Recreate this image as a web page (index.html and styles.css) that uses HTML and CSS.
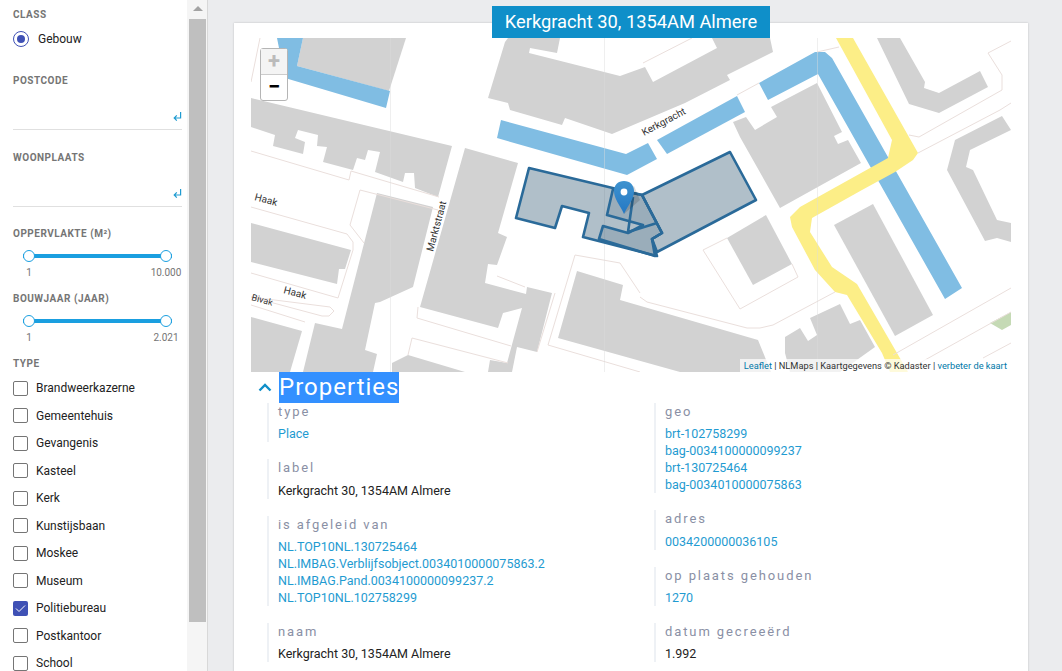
FILE: index.html

```html
<!DOCTYPE html>
<html>
  <head>
    <meta http-equiv="Content-Type" content="text/html; charset=UTF-8" />
    <title>Kerkgracht 30, 1354AM Almere</title>
    <link rel="stylesheet" href="styles.css">
  </head>
  <body>
  <div class="page">
    <aside class="filters">
      <div class="label first">Class</div>
      <div class="radio-row"><span class="radio"></span>Gebouw</div>

      <div class="label postcode">Postcode</div>
      <div class="input">
        <svg class="enter" width="9" height="9" viewBox="0 0 9 9"><path d="M7.6 0V6H1.2M3.8 3.4L1.2 6L3.8 8.6" fill="none" stroke="#1f9bd1" stroke-width="1.2"/></svg>
      </div>

      <div class="label woonplaats">Woonplaats</div>
      <div class="input">
        <svg class="enter" width="9" height="9" viewBox="0 0 9 9"><path d="M7.6 0V6H1.2M3.8 3.4L1.2 6L3.8 8.6" fill="none" stroke="#1f9bd1" stroke-width="1.2"/></svg>
      </div>

      <div class="label oppervlakte">Oppervlakte (m²)</div>
      <div class="slider"><span class="handle"></span><span class="handle"></span></div>
      <div class="range"><span>1</span><span>10.000</span></div>

      <div class="label bouwjaar">Bouwjaar (jaar)</div>
      <div class="slider"><span class="handle"></span><span class="handle"></span></div>
      <div class="range"><span>1</span><span>2.021</span></div>

      <div class="label type">Type</div>
      <ul class="checks">
        <li><span class="box"></span>Brandweerkazerne</li>
        <li><span class="box"></span>Gemeentehuis</li>
        <li><span class="box"></span>Gevangenis</li>
        <li><span class="box"></span>Kasteel</li>
        <li><span class="box"></span>Kerk</li>
        <li><span class="box"></span>Kunstijsbaan</li>
        <li><span class="box"></span>Moskee</li>
        <li><span class="box"></span>Museum</li>
        <li><span class="box checked"><svg width="15" height="15" viewBox="0 0 15 15"><path d="M3 7.5L6 10.5L12 4.5" fill="none" stroke="#fff" stroke-width="1"/></svg></span>Politiebureau</li>
        <li><span class="box"></span>Postkantoor</li>
        <li><span class="box"></span>School</li>
      </ul>
    </aside>

    <div class="scrollbar">
      <span class="arrow"></span>
      <span class="thumb"></span>
    </div>

    <main class="content">
      <div class="card">
        <div class="title-row"><h1 class="title">Kerkgracht 30, 1354AM Almere</h1></div>

        <div class="map">
          <svg class="tiles" width="760" height="334" viewBox="251 38 760 334">
            <g fill="#d2d2d2">
              <polygon points="303,38 406,38 389,91 297,66"/>
              <polygon points="251,98 452,146 438,197 415,188 414,173 405,173 403,182 375,172 380,152 368,150 365,160 357,158 353,170 323,162 327,147 317,146 318,135 298,130 295,138 305,142 303,154 273,146 275,135 251,127"/>
              <polygon points="508,38 505,42 488,98 508,103 510,110 562,125 565,118 612,134 685,103 730,80 727,75 773,52 770,38 712,38 717,48 653,82 645,67 620,76 529,53 530,48 557,53 560,38"/>
              <polygon points="733,122 746,117 755,130 777,117 771,107 817,83 842,132 834,136 838,144 848,140 861,163 780,208 740,137"/>
              <polygon points="877,38 900,38 925,82 924,88 939,93 980,71 988,87 939,113 909,104"/>
              <polygon points="1002,116 1011,130 970,150 966,167 973,170 997,220 1011,223 1011,242 997,238 985,241 947,170 955,140"/>
              <polygon points="873,204 933,315 895,336 834,225"/>
              <polygon points="766,215 792,264 753,285 727,238"/>
              <polygon points="577,271 623,285 620,300 758,340 771,372 680,372 558,338"/>
              <polygon points="840,304 850,324 860,320 875,347 840,372 790,372 785,353 785,337 800,328 808,341 817,335 810,318"/>
              <polygon points="377,193 433,207 413,287 380,302 375,303 365,350 377,354 373,372 303,372 315,323 342,329"/>
              <polygon points="465,148 518,163 498,233 507,237 497,265 488,264 485,283 526,294 527,287 552,293 537,352 517,347 512,372 488,372 490,360 507,363 522,308 503,313 498,328 420,307"/>
              <polygon points="251,223 351,250 345,269 339,269 337,284 251,262"/>
              <polygon points="251,317 302,331 290,372 251,372"/>
              <polygon points="392,372 392,363 408,355 465,372"/>
            </g>
            <g fill="#80bde3">
              <polygon points="277,38 303,38 297,66 390,91 386,108 285,78"/>
              <polygon points="501,120 497,138 627,175 657,159 648,143 626,154"/>
              <polygon points="657,140 667,154 745,112 737,96"/>
              <polygon points="759,83 768,100 818,74 945,299 962,288 832,58 825,52 815,52"/>
            </g>
            <polygon fill="#fcee87" points="836,38 853,38 918,153 913,160 895,172 862,190 812,218 810,232 832,267 857,284 908,372 890,372 882,353 847,295 835,292 815,270 792,227 790,217 800,207 888,158 892,140"/>
            <polygon fill="#c5dab5" points="1011,312 990,323 1002,330 1011,325"/>
            <g fill="none" stroke="#eadfdc" stroke-width="1">
              <polyline points="251,151 349,180 351,171 439,197"/>
              <polyline points="251,207 347,234 353,242 353,250 338,298 251,273"/>
              <polyline points="360,190 350,225 364,243"/>
              <polyline points="360,190 438,210"/>
              <polyline points="251,297 330,307 334,311 329,316 322,316 251,297"/>
              <polyline points="251,305 305,322"/>
              <polyline points="418,307 417,318 511,346"/>
              <polyline points="408,355 412,338 508,363"/>
              <polyline points="497,276 525,287"/>
              <polyline points="555,293 537,352"/>
              <polyline points="640,372 548,345 575,255 620,263 640,293"/>
              <polyline points="640,297 647,302 747,328 760,328 773,325 835,292"/>
              <polyline points="727,238 703,250 740,309 798,277 792,264"/>
              <polyline points="1011,288 893,355"/>
              <polyline points="1011,312 907,370"/>
              <polyline points="1011,343 983,358"/>
              <polyline points="918,153 1000,110 1011,103"/>
              <polyline points="909,135 919,137 1002,90 1002,75 988,53 1011,41"/>
              <polyline points="643,63 692,38"/>
              <polyline points="737,95 759,83"/>
              <polyline points="817,52 839,47"/>
              <polyline points="251,82 260,38"/>
            </g>
            <g stroke="#dcdcdc" stroke-opacity="0.45" stroke-width="1">
              <line x1="390.5" y1="38" x2="390.5" y2="372"/>
              <line x1="604.5" y1="38" x2="604.5" y2="372"/>
              <line x1="817.5" y1="38" x2="817.5" y2="372"/>
            </g>
            <g class="street">
              <text transform="translate(644,136) rotate(-28)">Kerkgracht</text>
              <text transform="translate(433,252) rotate(-75)">Marktstraat</text>
              <text transform="translate(254,200) rotate(15)">Haak</text>
              <text transform="translate(283,293) rotate(15)">Haak</text>
              <text class="small" transform="translate(251,300) rotate(15)">Bivak</text>
            </g>
            <g fill="#3a5f78" stroke="#2a6a99" stroke-width="2.6" stroke-linejoin="round">
              <polygon fill-opacity="0.4" points="529,168 642,195 662,233 652,239 657,256 583,237 589,213 562,206 555,228 516,218"/>
              <polygon fill-opacity="0.4" points="642,195 730,152 756,200 657,252 652,239 662,233"/>
              <polygon fill-opacity="0.18" points="613,189 607,215 643,225 628,233 603,226 599,239 655,256 652,239 662,233 642,195"/>
              <polyline fill="none" points="633,197 628,232 657,223"/>
            </g>
            <defs>
              <linearGradient id="pin" x1="0" y1="0" x2="0" y2="1">
                <stop offset="0" stop-color="#3f93cf"/>
                <stop offset="1" stop-color="#2478c4"/>
              </linearGradient>
            </defs>
            <path d="M624 214L640 200L634 186L628 190Z" fill="#000" fill-opacity="0.14"/>
            <path d="M624 214C620 205 614 199 614 191C614 185 618 181 624 181C630 181 634 185 634 191C634 199 628 205 624 214Z" fill="url(#pin)"/>
            <circle cx="624" cy="192" r="3.4" fill="#fff"/>
          </svg>

          <div class="zoom">
            <span class="zoom-in">+</span>
            <span class="zoom-out">−</span>
          </div>
          <div class="attribution"><a href="#">Leaflet</a> | NLMaps | Kaartgegevens © Kadaster | <a href="#">verbeter de kaart</a></div>
        </div>

        <div class="heading">
          <svg class="chevron" width="14" height="9" viewBox="0 0 14 9"><path d="M1.5 7.5L7 2L12.5 7.5" fill="none" stroke="#0f8fc9" stroke-width="2.4"/></svg>
          <h2>Properties</h2>
        </div>

        <div class="props">
          <div class="col">
            <div class="prop">
              <div class="prop-name">type</div>
              <div class="prop-value"><a href="#">Place</a></div>
            </div>
            <div class="prop">
              <div class="prop-name">label</div>
              <div class="prop-value">Kerkgracht 30, 1354AM Almere</div>
            </div>
            <div class="prop">
              <div class="prop-name">is afgeleid van</div>
              <div class="prop-value">
                <a href="#">NL.TOP10NL.130725464</a>
                <a href="#">NL.IMBAG.Verblijfsobject.0034010000075863.2</a>
                <a href="#">NL.IMBAG.Pand.0034100000099237.2</a>
                <a href="#">NL.TOP10NL.102758299</a>
              </div>
            </div>
            <div class="prop">
              <div class="prop-name">naam</div>
              <div class="prop-value">Kerkgracht 30, 1354AM Almere</div>
            </div>
          </div>
          <div class="col">
            <div class="prop">
              <div class="prop-name">geo</div>
              <div class="prop-value">
                <a href="#">brt-102758299</a>
                <a href="#">bag-0034100000099237</a>
                <a href="#">brt-130725464</a>
                <a href="#">bag-0034010000075863</a>
              </div>
            </div>
            <div class="prop">
              <div class="prop-name">adres</div>
              <div class="prop-value"><a href="#">0034200000036105</a></div>
            </div>
            <div class="prop">
              <div class="prop-name">op plaats gehouden</div>
              <div class="prop-value"><a href="#">1270</a></div>
            </div>
            <div class="prop">
              <div class="prop-name">datum gecreeërd</div>
              <div class="prop-value">1.992</div>
            </div>
          </div>
        </div>
      </div>
    </main>
  </div>
  </body>
</html>
```

FILE: styles.css

```css
html, body {
  margin: 0;
  height: 100%;
  overflow: hidden;
}
body {
  font-family: Roboto, "Liberation Sans", sans-serif;
  background-color: #ebecee;
  color: #222;
}
a, a:visited {
  color: #1f9bd1;
  text-decoration: none;
}
.page {
  display: flex;
  height: 671px;
  overflow: hidden;
}

/* filter column */
.filters {
  width: 187px;
  flex: none;
  box-sizing: border-box;
  padding: 9px 5px 0 13px;
  background-color: #fff;
  font-size: 12px;
}
.label {
  font-size: 10px;
  line-height: 12px;
  font-weight: bold;
  letter-spacing: 0.5px;
  text-transform: uppercase;
  color: #757575;
}
.postcode { margin-top: 28px; }
.woonplaats { margin-top: 22px; }
.oppervlakte { margin-top: 21px; }
.bouwjaar { margin-top: 14px; }
.type { margin-top: 14px; }
.radio-row {
  display: flex;
  align-items: center;
  gap: 9px;
  height: 16px;
  margin-top: 10px;
}
.radio {
  width: 14px;
  height: 14px;
  border: 1px solid #3f51b5;
  border-radius: 50%;
  display: flex;
  align-items: center;
  justify-content: center;
}
.radio::after {
  content: "";
  width: 8px;
  height: 8px;
  border-radius: 50%;
  background-color: #3f51b5;
}
.input {
  height: 42px;
  border-bottom: 1px solid #e0e0e0;
  display: flex;
  justify-content: flex-end;
  align-items: flex-end;
}
.enter {
  margin-bottom: 8px;
}
.slider {
  display: flex;
  justify-content: space-between;
  height: 12px;
  width: 149px;
  margin: 10px 0 0 10px;
  background: linear-gradient(#1a9fe0, #1a9fe0) center / 100% 4px no-repeat;
}
.handle {
  width: 10px;
  height: 10px;
  border: 1px solid #1a9fe0;
  border-radius: 50%;
  background-color: #fff;
}
.range {
  display: flex;
  justify-content: space-between;
  width: 137px;
  height: 12px;
  margin: 5px 0 0 16px;
  font-size: 10px;
  line-height: 12px;
  color: #757575;
}
.range span {
  width: 0;
  display: flex;
  justify-content: center;
  white-space: nowrap;
}
.checks {
  list-style: none;
  margin: 4.4px 0 0;
  padding: 0;
}
.checks li {
  display: flex;
  align-items: center;
  gap: 8px;
  height: 27.5px;
}
.box {
  width: 13px;
  height: 13px;
  border: 1px solid #757575;
  border-radius: 2px;
  flex: none;
}
.box.checked {
  width: 15px;
  height: 15px;
  border: 0;
  background-color: #3f51b5;
}
.box.checked svg {
  display: block;
}

/* fake scroll track */
.scrollbar {
  width: 21px;
  flex: none;
  box-sizing: border-box;
  padding: 6px 1px 0 2px;
  background-color: #f5f5f5;
  border-right: 1px solid #d8d8d8;
  display: flex;
  flex-direction: column;
  align-items: center;
}
.arrow {
  width: 0;
  height: 0;
  border-left: 5px solid transparent;
  border-right: 5px solid transparent;
  border-bottom: 5px solid #a3a3a3;
}
.thumb {
  width: 100%;
  height: 603px;
  margin-top: 8px;
  background-color: #bfbfbf;
}

/* main */
.content {
  flex: 1;
  padding: 23px 0 0 26px;
  min-width: 0;
}
.card {
  width: 794px;
  height: 700px;
  box-sizing: border-box;
  padding: 0 17px;
  background-color: #fff;
  box-shadow: 0 0 2px rgba(0, 0, 0, 0.2);
}
.title-row {
  display: flex;
  justify-content: center;
  height: 15px;
}
.title {
  margin: -17px 0 0;
  height: 32px;
  padding: 0 12.5px;
  font-size: 18.3px;
  line-height: 32px;
  font-weight: normal;
  color: #fff;
  background-color: #0f8fc9;
  position: relative;
  z-index: 2;
}
.map {
  position: relative;
  width: 760px;
  height: 334px;
  overflow: hidden;
}
.tiles {
  display: block;
}
.street {
  font-size: 10px;
  fill: #333;
}
.street .small {
  font-size: 9px;
}
.zoom {
  position: absolute;
  left: 9px;
  top: 10px;
  width: 26px;
  border: 1px solid #b5b5b5;
  border-radius: 3px;
  background-color: #fff;
  display: flex;
  flex-direction: column;
}
.zoom span {
  height: 25px;
  text-align: center;
  font-size: 22px;
  line-height: 23px;
  font-weight: bold;
}
.zoom-in {
  background-color: #f4f4f4;
  color: #bbb;
  border-bottom: 1px solid #ccc;
}
.zoom-out {
  color: #000;
}
.attribution {
  position: absolute;
  right: 0;
  bottom: 0;
  padding: 0 4px;
  height: 13px;
  font-size: 9.25px;
  line-height: 13px;
  color: #333;
  background-color: rgba(255, 255, 255, 0.7);
  white-space: nowrap;
}
.attribution a {
  color: #0078a8;
}
.heading {
  display: flex;
  align-items: center;
  gap: 7px;
  margin-left: 7px;
  height: 31px;
}
.heading h2 {
  margin: 0;
  font-size: 24px;
  line-height: 31px;
  font-weight: normal;
  letter-spacing: 1px;
  color: #fff;
  background-color: #3390ff;
}
.props {
  display: flex;
  margin-left: 16px;
}
.col {
  flex: none;
  width: 387px;
  display: flex;
  flex-direction: column;
  gap: 17.2px;
}
.prop {
  border-left: 2px solid #eef1f5;
  padding-left: 9px;
}
.prop-name {
  font-size: 13px;
  line-height: 18px;
  letter-spacing: 1.9px;
  color: #8a90a5;
}
.prop-value {
  margin-top: 4.2px;
  font-size: 12.5px;
  line-height: 17px;
}
.prop-value a {
  display: block;
}
```
